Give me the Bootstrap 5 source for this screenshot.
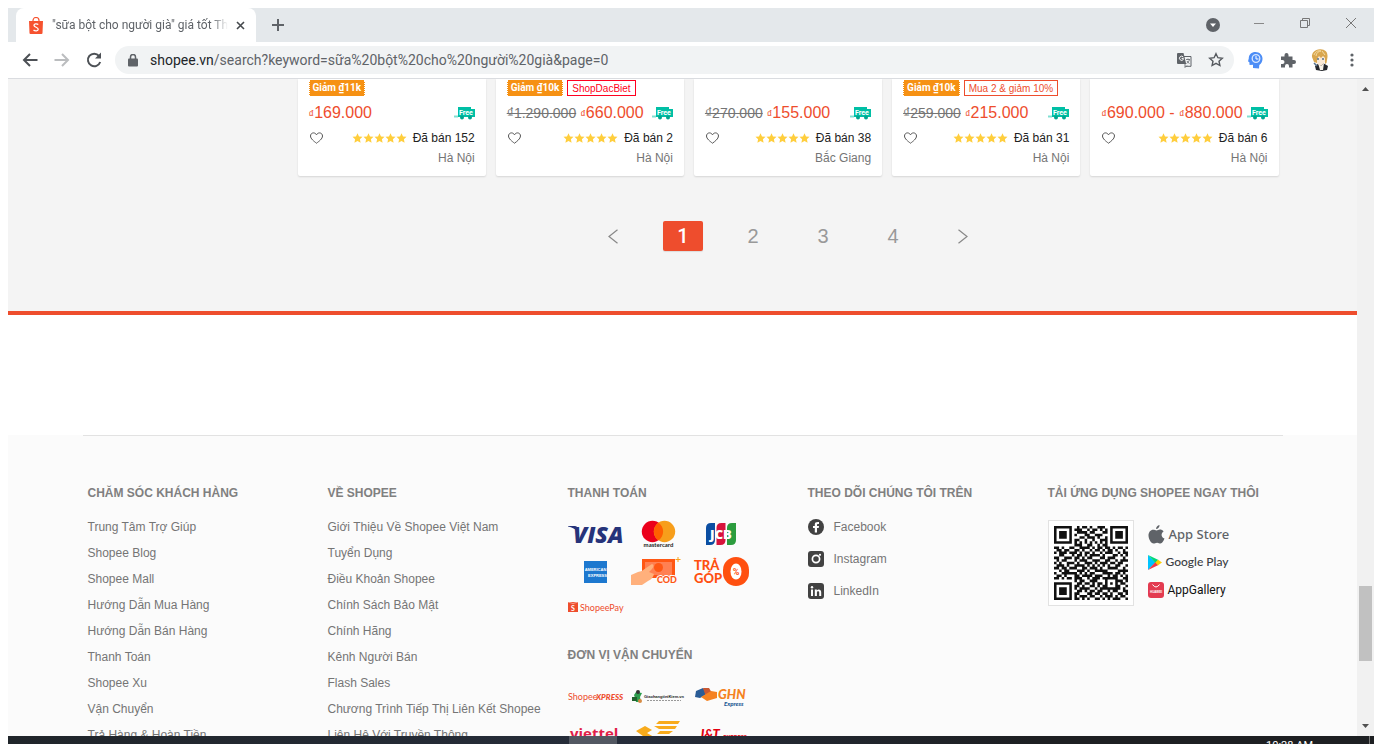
<!DOCTYPE html>
<html lang="vi">
<head>
<meta charset="utf-8">
<meta name="viewport" content="width=device-width, initial-scale=1">
<title>"sữa bột cho người già" giá tốt</title>
<link href="https://cdn.jsdelivr.net/npm/bootstrap@5.3.0/dist/css/bootstrap.min.css" rel="stylesheet">
<script src="https://cdn.jsdelivr.net/npm/bootstrap@5.3.0/dist/js/bootstrap.bundle.min.js"></script>
<style>
  body { font: 12px/16px "Liberation Sans", Arial, sans-serif; color: #222; background: #fff; padding: 8px 8px 0; }
  a { color: inherit; text-decoration: none; }
  button { border: 0; background: none; padding: 0; color: #5f6368; display: inline-flex; align-items: center; justify-content: center; }
  svg { display: block; flex: none; }
  /* browser frame */
  .ui-font { font-family: Roboto, "Noto Sans", sans-serif; }
  .tab-strip { background: #e4e8eb; height: 34px; padding-right: 18px; }
  .tab-item { background: #fff; width: 240px; margin-left: 8px; border-radius: 8px 8px 0 0; padding: 0 10px 0 12px; color: #5f6368; font-size: 12px; }
  .tab-title { width: 176px; overflow: hidden; white-space: nowrap; -webkit-mask-image: linear-gradient(90deg, #000 160px, transparent 176px); mask-image: linear-gradient(90deg, #000 160px, transparent 176px); }
  .window-controls { gap: 34px; }
  .toolbar { height: 37px; border-bottom: 1px solid #dadce0; padding: 0 14px; }
  .omnibox { background: #f1f3f4; border-radius: 14px; height: 28px; padding: 0 10px 0 13px; margin: 0 13px; gap: 12px; }
  .address { font-size: 14px; color: #5f6368; white-space: nowrap; }
  .extensions { gap: 15px; }
  .scroll-track { width: 17px; background: #f1f1f1; }
  .scroll-thumb { width: 13px; height: 75px; background: #c1c1c1; margin-top: 495px; }
  .taskbar { height: 8px; background: linear-gradient(90deg, #20252a, #262d3a 45%, #1d1f22 75%); overflow: hidden; }
  .task-active { width: 48px; background: #535862; margin-left: 561px; }
  .task-clock { color: #fff; padding: 2px 56px 0 0; font-size: 11px; }
  .task-edge { width: 5px; border-left: 1px solid #777; }
  /* results */
  .page { width: 1200px; max-width: 100%; }
  .results { background: #f4f4f4; border-bottom: 4px solid #ee4d2d; height: 236px; }
  .side { width: 215px; }
  .products { gap: 10px; }
  .product { background: #fff; height: 97px; padding: 1px 11px 10px; flex: 1 1 0; border-radius: 0 0 2px 2px; box-shadow: 0 1px 2px rgba(0,0,0,.13); min-width: 0; }
  .tags { height: 16px; gap: 4px; }
  .voucher { background: #f69113; color: #fff; font: bold 10px/16px Roboto, sans-serif; padding: 0 3px; border: dotted #fff; border-width: 0 1px; }
  .promo { color: #ee4d2d; border: 1px solid; font-size: 10px; line-height: 14px; padding: 1px 4px 0; height: 16px; }
  .promo-pink { color: #ff0020; }
  .price-row { height: 24px; margin-top: 5px; }
  .price { color: #ee4d2d; font-size: 16px; line-height: 24px; padding-top: 1px; }
  .price small { font-size: 11px; }
  .old-price { color: #757575; font-size: 14px; margin-right: 4px; }
  .sold-row { height: 20px; margin-top: 3px; }
  .rating { margin-right: 6px; }
  .place { color: #757575; line-height: 20px; }
  .pager { padding-top: 45px; gap: 30px; }
  .pager button { width: 40px; height: 30px; font-size: 20px; color: #999; border-radius: 2px; }
  .pager .current { background: #ee4d2d; color: #fff; font-family: Roboto, sans-serif; font-weight: 500; box-shadow: 0 1px 1px rgba(0,0,0,.1); }
  /* footer */
  .gap-band { height: 120px; }
  .foot { background: #fbfbfb; color: #757575; }
  .foot .page { border-top: 1px solid #e2e2e2; padding-top: 49px; }
  .foot-col { flex: 1 1 0; padding: 0 5px; min-width: 0; }
  .foot h2 { font-size: 12px; line-height: 16px; font-weight: bold; margin: 0 0 18px; color: #808080; white-space: nowrap; }
  .foot li { line-height: 16px; margin-bottom: 10px; white-space: nowrap; }
  .logos { display: grid; grid-template-columns: repeat(3, 55px); grid-auto-rows: 29px; gap: 8px; padding-top: 1px; }
  .apps { padding-top: 1px; gap: 14px; }
  .foot .social li { margin-bottom: 16px; }
  .qr { border: 1px solid #e2e2e2; background: #fff; width: 86px; height: 86px; padding: 5px; }
  .store { gap: 4px; height: 28px; }
  .store-apple { font: 500 13px/20px "Noto Sans", sans-serif; color: #5f6368; }
  .store-play { font: 500 12px/20px Lato, sans-serif; color: #3c4043; }
  .store-gallery { font: 12px/20px Roboto, sans-serif; color: #111; }
</style>
</head>
<body class="vh-100 d-flex flex-column overflow-hidden">
<svg width="0" height="0" class="position-absolute" aria-hidden="true">
  <defs>
    <symbol id="star" viewBox="0 0 11 10"><path fill="#ffce3d" d="M5.500 .2l1.500 3.200 3.500.4-2.600 2.400.7 3.500-3.100-1.800-3.100 1.800.7-3.500L.5 3.800 4 3.400z"/></symbol>
    <symbol id="heart" viewBox="0 0 14 12"><path fill="none" stroke="#555" d="M7 11.200C4.600 9.400 1 6.800 1 4 1 2.200 2.300.9 4 .9c1.300 0 2.400.8 3 1.900C7.600 1.700 8.700.9 10 .9c1.700 0 3 1.300 3 3.100 0 2.800-3.600 5.400-6 7.200z"/></symbol>
    <symbol id="truck" viewBox="0 0 21 13"><path fill="#00bfa5" d="M4 0h13v2h4v8H4z"/><path fill="#80dfd2" d="M0 8.500h4v2H0z"/><circle cx="8" cy="10.500" r="2" fill="#00a58f"/><circle cx="16" cy="10.500" r="2" fill="#00a58f"/><text x="5" y="7.500" font-family="Roboto" font-weight="bold" font-size="7" fill="#fff">Free</text></symbol>
  </defs>
</svg>

<header class="ui-font">
  <div class="tab-strip d-flex align-items-stretch">
    <div class="tab-item d-flex align-items-center">
      <svg width="16" height="17" viewBox="0 0 16 17"><path d="M5 5V3.500a3 3 0 0 1 6 0V5" fill="none" stroke="#f6522f" stroke-width="1.200"/><path d="M1 4h14l-.5 12a1 1 0 0 1-1 1h-11a1 1 0 0 1-1-1z" fill="#f6522f"/><path d="M10.300 7.600C8.800 6.300 5.900 6.600 6 8.500c.1 2 4.300 1.500 4.200 3.700-.1 2-3 2.300-4.700.8" fill="none" stroke="#fff" stroke-width="1.300"/></svg>
      <span class="tab-title ms-2">"sữa bột cho người già" giá tốt Th</span>
      <button type="button" class="ms-2" aria-label="Đóng thẻ"><svg width="9" height="9" viewBox="0 0 9 9"><path d="M1 1l7 7M8 1L1 8" stroke="#45494d" stroke-width="1.600"/></svg></button>
    </div>
    <button type="button" class="ms-3" aria-label="Thẻ mới"><svg width="12" height="12" viewBox="0 0 12 12"><path d="M6 0v12M0 6h12" stroke="#5f6368" stroke-width="2"/></svg></button>
    <div class="window-controls ms-auto d-flex align-items-center">
      <button type="button" aria-label="Tìm kiếm thẻ"><svg width="14" height="14" viewBox="0 0 14 14"><circle cx="7" cy="7" r="7" fill="#5f6368"/><path d="M4 5.500h6L7 9z" fill="#fff"/></svg></button>
      <button type="button" class="pb-1" aria-label="Thu nhỏ"><svg width="10" height="10" viewBox="0 0 10 10"><path d="M0 5.500h10" stroke="#888"/></svg></button>
      <button type="button" class="pb-1" aria-label="Khôi phục"><svg width="14" height="10" viewBox="0 0 14 10"><path d="M2.500 2.500h7v7h-7zM4.500 2.500v-2h7v7h-2" fill="none" stroke="#777"/></svg></button>
      <button type="button" class="pb-1" aria-label="Đóng"><svg width="10" height="10" viewBox="0 0 10 10"><path d="M0 0l10 10M10 0L0 10" stroke="#777"/></svg></button>
    </div>
  </div>
  <div class="toolbar d-flex align-items-center">
    <button type="button" aria-label="Quay lại"><svg width="16" height="14" viewBox="0 0 16 14"><path d="M15.500 7H3M8 1L2 7l6 6" fill="none" stroke="#4d5156" stroke-width="2"/></svg></button>
    <button type="button" class="ms-3" aria-label="Tiến"><svg width="16" height="14" viewBox="0 0 16 14"><path d="M.5 7H13M8 1l6 6-6 6" fill="none" stroke="#bbbdbf" stroke-width="2"/></svg></button>
    <button type="button" class="ms-3" aria-label="Tải lại"><svg width="16" height="16" viewBox="0 0 16 16"><path d="M13 3.800A6.300 6.300 0 1 0 14.200 10" fill="none" stroke="#4d5156" stroke-width="2"/><path d="M15 .5v6H9z" fill="#4d5156"/></svg></button>
    <div class="omnibox d-flex align-items-center flex-grow-1">
      <svg width="10" height="13" viewBox="0 0 10 13"><rect y="4.500" width="10" height="8" rx="1" fill="#5f6368"/><path d="M2.500 5V3a2.500 2.500 0 0 1 5 0v2" fill="none" stroke="#5f6368" stroke-width="1.500"/></svg>
      <a href="#" class="address flex-grow-1"><span class="text-dark">shopee.vn</span>/search?keyword=sữa%20bột%20cho%20người%20già&amp;page=0</a>
      <button type="button" aria-label="Dịch"><svg width="15" height="15" viewBox="0 0 15 15"><path d="M6.500 3.500h7.500v9.800H8.500" fill="none" stroke="#5f6368"/><path d="M1 0h5.500l2.700 11H1a1 1 0 0 1-1-1V1a1 1 0 0 1 1-1z" fill="#5f6368"/><path d="M6.300 4A2.100 2.100 0 1 0 6.300 6.500V5.400H4.600" fill="none" stroke="#fff"/><path d="M9 6.500h4M11 5.500v1M12.500 6.500c-.5 2-1.500 3-3 4M10 8c.5 1 1.500 2 2.500 2.500M8 11v3.500l2-2" fill="none" stroke="#5f6368" stroke-width=".8"/></svg></button>
      <button type="button" class="ms-1" aria-label="Đánh dấu trang"><svg width="16" height="16" viewBox="0 0 16 16"><path d="M8 1.700l1.900 4 4.400.5-3.300 3 .9 4.300L8 11.400l-3.900 2.100.9-4.300-3.300-3 4.400-.5z" fill="none" stroke="#55595e" stroke-width="1.400"/></svg></button>
    </div>
    <div class="extensions d-flex align-items-center">
      <button type="button" aria-label="Tiện ích"><svg width="18" height="17" viewBox="-1 0 18 17"><path d="M7.500 0C3.500 0 .8 2.700.8 6.200L0 9.500l1.300.6.3 3 3.400-.3V16l6 .5.300-3.500C13.500 11.500 14.500 9.300 14.500 6.800 14.500 2.800 11.500 0 7.500 0z" fill="#4c8df6"/><circle cx="8" cy="6.500" r="3.800" fill="none" stroke="#d8e7ff" stroke-width="1.300"/><path d="M8 4v3h2.500" fill="none" stroke="#fff"/></svg></button>
      <button type="button" aria-label="Phần mở rộng"><svg width="16" height="16" viewBox="0 0 16 16"><path d="M1 4.500h3.500V3a2 2 0 1 1 4 0v1.500h4V8H14a2 2 0 1 1 0 4h-1.500v3.500H9V14a2 2 0 1 0-4 0v1.500H1V12h1.500a2 2 0 1 0 0-4H1z" fill="#5f6368"/></svg></button>
      <button type="button" aria-label="Hồ sơ"><svg width="18" height="22" viewBox="0 0 18 22"><path d="M4 17l4-3h4l5 3-1 4-5 1-6-1z" fill="#26282d"/><path d="M7 14l3 3 3-3-1 7H9z" fill="#f7f2e8"/><path d="M4 7h10v6l-4 4-5-3z" fill="#fbe9d4"/><path d="M1 8C.5 4 4 0 9.500.3 14 .5 17 3 16.500 8l-1 6-1.500 1V9l-2-2-2 2-2-2-2 3v4l-3-1z" fill="#d9a74f"/><path d="M3 6c1-3 4-5 7-4-2 0-5 2-5 5M11 2l3 4" fill="none" stroke="#f5dba0"/><path d="M6 10h2M11 10h2M3 14l3 3" stroke="#57718b" stroke-width="1.500"/></svg></button>
      <button type="button" aria-label="Trình đơn"><svg width="16" height="14" viewBox="0 0 16 14" fill="#5f6368"><circle cx="8" cy="2" r="1.600"/><circle cx="8" cy="7" r="1.600"/><circle cx="8" cy="12" r="1.600"/></svg></button>
    </div>
  </div>
</header>

<div class="d-flex flex-grow-1 overflow-hidden">
  <div class="flex-grow-1 overflow-hidden">
    <main class="results">
      <div class="page mx-auto d-flex">
        <div class="side flex-shrink-0"></div>
        <div class="flex-grow-1 pe-1">
          <div class="products d-flex" id="products"></div>
          <nav class="pager d-flex justify-content-center" aria-label="Trang">
            <button type="button" aria-label="Trang trước"><svg width="10" height="15" viewBox="0 0 10 15"><path d="M9.500.8L1 7.500l8.500 6.700" fill="none" stroke="#888" stroke-width="1.200"/></svg></button>
            <button type="button" class="current">1</button>
            <button type="button">2</button>
            <button type="button">3</button>
            <button type="button">4</button>
            <button type="button" aria-label="Trang sau"><svg width="10" height="15" viewBox="0 0 10 15"><path d="M.5.8L9 7.500.5 14.200" fill="none" stroke="#888" stroke-width="1.200"/></svg></button>
          </nav>
        </div>
      </div>
    </main>
    <div class="gap-band"></div>
    <footer class="foot">
      <div class="page mx-auto d-flex">
        <section class="foot-col">
          <h2>CHĂM SÓC KHÁCH HÀNG</h2>
          <ul class="list-unstyled">
            <li><a href="#">Trung Tâm Trợ Giúp</a></li><li><a href="#">Shopee Blog</a></li><li><a href="#">Shopee Mall</a></li><li><a href="#">Hướng Dẫn Mua Hàng</a></li><li><a href="#">Hướng Dẫn Bán Hàng</a></li><li><a href="#">Thanh Toán</a></li><li><a href="#">Shopee Xu</a></li><li><a href="#">Vận Chuyển</a></li><li><a href="#">Trả Hàng &amp; Hoàn Tiền</a></li>
          </ul>
        </section>
        <section class="foot-col">
          <h2>VỀ SHOPEE</h2>
          <ul class="list-unstyled">
            <li><a href="#">Giới Thiệu Về Shopee Việt Nam</a></li><li><a href="#">Tuyển Dụng</a></li><li><a href="#">Điều Khoản Shopee</a></li><li><a href="#">Chính Sách Bảo Mật</a></li><li><a href="#">Chính Hãng</a></li><li><a href="#">Kênh Người Bán</a></li><li><a href="#">Flash Sales</a></li><li><a href="#">Chương Trình Tiếp Thị Liên Kết Shopee</a></li><li><a href="#">Liên Hệ Với Truyền Thông</a></li>
          </ul>
        </section>
        <section class="foot-col">
          <h2>THANH TOÁN</h2>
          <div class="logos">
            <a href="#"><svg width="56" height="29" viewBox="0 0 56 29"><path d="M0 6h7q2 0 2.500 2l1 4Q6 7.500 0 6.500z" fill="#26337a"/><text x="5" y="23" font-family="Open Sans" font-style="italic" font-weight="800" font-size="23" fill="#26337a">VISA</text></svg></a>
            <a href="#"><svg width="55" height="29" viewBox="0 0 55 29"><circle cx="21.500" cy="11.500" r="10.700" fill="#eb001b"/><circle cx="33.500" cy="11.500" r="10.700" fill="#f79e1b"/><path d="M27.500 2.700a10.700 10.700 0 0 1 0 17.600 10.700 10.700 0 0 1 0-17.600z" fill="#ff5f00"/><text x="27.500" y="27" text-anchor="middle" font-family="Lato" font-weight="bold" font-size="6" fill="#222">mastercard</text></svg></a>
            <a href="#"><svg width="55" height="29" viewBox="0 0 55 29"><path d="M12 20V8q0-5 5-5h4v17q0 5-5 5h-4z" fill="#0b4ea2"/><path d="M22.500 20V8q0-5 5-5h4v17q0 5-5 5h-4z" fill="#d7133b"/><path d="M33 20V8q0-5 5-5h4v17q0 5-5 5h-4z" fill="#2c9c3e"/><text x="27" y="18.500" text-anchor="middle" font-family="Open Sans" font-weight="800" font-size="13" fill="#fff">JCB</text></svg></a>
            <a href="#"><svg width="55" height="29" viewBox="0 0 55 29"><path fill="#1d78cf" d="M16 4h23v22H16z"/><text x="27.500" y="14" text-anchor="middle" font-family="Liberation Sans" font-weight="bold" font-size="4" fill="#fff">AMERICAN</text><text x="29.500" y="19.500" text-anchor="middle" font-family="Liberation Sans" font-weight="bold" font-size="4" fill="#fff">EXPRESS</text></svg></a>
            <a href="#"><svg width="55" height="29" viewBox="0 0 55 29"><path fill="#ff5714" d="M11 2h33v19H11z"/><path fill="#ff8052" d="M14 5h27v13H14z"/><circle cx="27.500" cy="10.500" r="4.500" fill="#ff5714"/><path d="M0 18l7-3q5-1 8-4l6-4q3 1 0 5l-3 3 5 2q-1 5-6 7l-6 4H0z" fill="#ffb07c"/><path d="M47 0v5M44.500 2.500h5" stroke="#f9a11b"/><text x="26" y="26" font-family="Lato" font-weight="900" font-size="9" fill="#ff5714" stroke="#fbfbfb" stroke-width="2" paint-order="stroke">COD</text></svg></a>
            <a href="#"><svg width="58" height="29" viewBox="0 0 58 29" class="overflow-visible"><g font-family="Lato" font-weight="900" font-size="13" fill="#ff5010"><text x="0" y="13">TRẢ</text><text x="0" y="26">GÓP</text></g><rect x="29" width="26" height="29" rx="13" fill="#ff5010"/><ellipse cx="42" cy="14.500" rx="5.500" ry="8" fill="#fff"/><text x="42" y="18" text-anchor="middle" font-family="Roboto" font-weight="bold" font-size="9" fill="#ff5010">%</text></svg></a>
            <a href="#"><svg width="56" height="29" viewBox="0 0 56 29"><path fill="#ee4d2d" d="M0 8h10v10H0z"/><path d="M0 8q5 3 10 0" stroke="#fff" stroke-width=".5" fill="none"/><text x="3" y="17" font-family="Lato" font-weight="bold" font-size="7" fill="#fff">S</text><text x="12" y="17" font-family="Lato" font-size="9" fill="#ee4d2d">ShopeePay</text></svg></a>
          </div>
          <h2 class="mt-4">ĐƠN VỊ VẬN CHUYỂN</h2>
          <div class="logos">
            <a href="#"><svg width="56" height="29" viewBox="0 0 56 29" fill="#ee4d2d" font-family="Lato" font-size="9"><text y="18">Shopee</text><text x="28" y="18" font-weight="900" font-style="italic" font-size="8">XPRESS</text></svg></a>
            <a href="#"><svg width="55" height="29" viewBox="0 0 55 29"><path d="M3 13l2-3 6 1-2 4 1 5H5l-1-4z" fill="#2d9d4d"/><circle cx="7" cy="10" r="2" fill="#333"/><path d="M1 15h5v4H1z" fill="#21622f"/><circle cx="9" cy="19" r="2" fill="#d68b44"/><text x="13" y="16" font-family="Liberation Sans" font-weight="bold" font-size="4" fill="#222">GiaohangtietKiem.vn</text><path d="M16 18.500h34" stroke="#999" stroke-dasharray="2 1"/></svg></a>
            <a href="#"><svg width="58" height="29" viewBox="0 0 58 29"><path d="M2 9l7-3 4 6-7 4-5-1z" fill="#2a5c96"/><path d="M9 6l6 0 3 5-6 4z" fill="#c95832"/><path d="M7 15l10-6 6 1v6l-10 3z" fill="#f58220"/><text x="24" y="17" font-family="Lato" font-weight="900" font-style="italic" font-size="13" fill="#f58220">GHN</text><text x="30" y="24" font-family="Lato" font-weight="900" font-style="italic" font-size="6" fill="#1b5794">Express</text></svg></a>
            <a href="#"><svg width="56" height="29" viewBox="0 0 56 29"><text x="2" y="20" font-family="Open Sans" font-weight="bold" font-size="15" fill="#e11d48">viettel</text></svg></a>
            <a href="#"><svg width="55" height="29" viewBox="0 0 55 29"><g fill="#f8ab1c"><path d="M5 12l9-5 7 4-5 3 7 4v7z"/><path d="M28 2h21l-2 3H25zM23 7h23l-2 3H28zM29 12h13l-4 3H26zM25 17h11L20 27z"/></g></svg></a>
            <a href="#"><svg width="55" height="29" viewBox="0 0 55 29" fill="#e3000f" font-family="Lato" font-weight="900" font-style="italic"><text x="5" y="20" font-size="13">J&amp;T</text><text x="29" y="20" font-size="6">EXPRESS</text></svg></a>
          </div>
        </section>
        <section class="foot-col">
          <h2>THEO DÕI CHÚNG TÔI TRÊN</h2>
          <ul class="list-unstyled social">
            <li><a href="#" class="d-flex align-items-center"><svg class="me-2" width="18" height="16" viewBox="0 0 18 16"><circle cx="8" cy="8" r="8" fill="#424242"/><path d="M6.800 13.500V9H5V7h1.800V5.500C6.800 3.600 7.800 2.800 11 3v1.900c-1.500-.1-2 .1-2 .9V7h2l-.3 2H9v4.500z" fill="#fff"/></svg>Facebook</a></li>
            <li><a href="#" class="d-flex align-items-center"><svg class="me-2" width="18" height="16" viewBox="0 0 18 16"><rect width="16" height="16" rx="3" fill="#424242"/><circle cx="8" cy="8" r="3.600" fill="none" stroke="#fff" stroke-width="1.700"/><circle cx="12" cy="3.800" r="1.100" fill="#fff"/></svg>Instagram</a></li>
            <li><a href="#" class="d-flex align-items-center"><svg class="me-2" width="18" height="16" viewBox="0 0 18 16"><rect width="16" height="16" rx="3" fill="#424242"/><path d="M3 6.500h2V13H3zM6.800 6.500h2v1c1.300-1.700 4.400-1.400 4.400 1.700V13h-2V9.500c0-1.800-2.300-1.700-2.300 0V13H6.800z" fill="#fff"/><circle cx="4" cy="4.300" r="1.200" fill="#fff"/></svg>LinkedIn</a></li>
          </ul>
        </section>
        <section class="foot-col">
          <h2>TẢI ỨNG DỤNG SHOPEE NGAY THÔI</h2>
          <div class="apps d-flex">
            <a href="#" class="qr" aria-label="Mã QR tải ứng dụng"><svg id="qr" width="74" height="74" viewBox="0 0 29 29"></svg></a>
            <div>
              <a href="#" class="store d-flex align-items-center"><svg width="17" height="19" viewBox="0 0 16 19"><path fill="#5f6368" d="M11 0c.2 2-1.500 4-3.400 4C7.400 2.200 9 .3 11 0zM8 5.400C9 5.400 10 4.500 11.500 4.500c1.200 0 2.700.6 3.600 2-3 1.800-2.500 5.800.9 7-.8 2-2.300 5-4 5-1.300 0-1.800-.8-3.400-.8-1.700 0-2.200.8-3.500.8C2.500 18.500 0 14 0 10.500 0 7 2.200 4.700 4.600 4.700c1.400 0 2.400.7 3.400.7z"/></svg><span class="store-apple">App Store</span></a>
              <a href="#" class="store d-flex align-items-center"><svg width="14" height="15" viewBox="0 0 14 15"><path d="M0 0v15l7.500-7.500z" fill="#00c4ff"/><path d="M0 0l10.500 5L7.500 8z" fill="#00d978"/><path d="M0 15l10.500-5-3-3z" fill="#f23a48"/><path d="M10 4.800l4 2.700-4 2.700-2.700-2.700z" fill="#ffce00"/></svg><span class="store-play">Google Play</span></a>
              <a href="#" class="store d-flex align-items-center"><svg width="16" height="16" viewBox="0 0 16 16"><rect width="16" height="16" rx="3" fill="#e33b50"/><path d="M4.500 2.500q3.500 5 7 0" fill="none" stroke="#fff"/><text x="8" y="10.500" text-anchor="middle" font-family="Liberation Sans" font-weight="bold" font-size="3" fill="#fff">HUAWEI</text></svg><span class="store-gallery">AppGallery</span></a>
            </div>
          </div>
        </section>
      </div>
    </footer>
  </div>
  <div class="scroll-track d-flex flex-column align-items-center flex-shrink-0 py-2" aria-hidden="true">
    <svg width="7" height="4" viewBox="0 0 7 4"><path d="M0 4l3.500-4L7 4z" fill="#505050"/></svg>
    <div class="scroll-thumb"></div>
    <svg class="mt-auto" width="7" height="4" viewBox="0 0 7 4"><path d="M0 0l3.500 4L7 0z" fill="#505050"/></svg>
  </div>
</div>
<div class="taskbar d-flex flex-shrink-0 ui-font"><div class="task-active"></div><div class="task-clock ms-auto">10:28 AM</div><div class="task-edge"></div></div>

<script>
  const products = [
    { voucher: '₫11k', price: ['169.000'], sold: 152, place: 'Hà Nội' },
    { voucher: '₫10k', promo: 'ShopDacBiet', pink: true, old: '1.290.000', price: ['660.000'], sold: 2, place: 'Hà Nội' },
    { old: '270.000', price: ['155.000'], sold: 38, place: 'Bắc Giang' },
    { voucher: '₫10k', promo: 'Mua 2 & giảm 10%', old: '259.000', price: ['215.000'], sold: 31, place: 'Hà Nội' },
    { price: ['690.000', '880.000'], sold: 6, place: 'Hà Nội' }
  ];
  const star = '<svg width="11" height="10"><use href="#star"/></svg>';
  document.getElementById('products').innerHTML = products.map(p => `
    <article class="product">
      <div class="tags d-flex">${p.voucher ? `<span class="voucher">Giảm ${p.voucher}</span>` : ''}${p.promo ? `<span class="promo ${p.pink ? 'promo-pink' : ''}">${p.promo.replace('&', '&amp;')}</span>` : ''}</div>
      <div class="price-row d-flex align-items-center text-nowrap">
        ${p.old ? `<del class="old-price">₫${p.old}</del>` : ''}<span class="price">${p.price.map(v => `<small>₫</small>${v}`).join(' - ')}</span>
        <svg class="ms-auto" width="21" height="13"><use href="#truck"/></svg>
      </div>
      <div class="sold-row d-flex align-items-center">
        <button type="button" aria-label="Yêu thích"><svg width="15" height="12"><use href="#heart"/></svg></button>
        <span class="rating d-flex ms-auto">${star.repeat(5)}</span><span>Đã bán ${p.sold}</span>
      </div>
      <div class="place text-end">${p.place}</div>
    </article>`).join('');

  // QR code, one string per row of modules
  const rows = [
    '11111110010110100111001111111','10000010111001011010101000001','10111010011110110001101011101','10111010100011001110001011101',
    '10111010001101110100101011101','10000010110010010011101000001','11111110101010101010101111111','00000000111001100101100000000',
    '11010011001111010110110101101','01101100110100101101011010010','10111011101011010010111001011','00110001011010111101000110101',
    '11001110110101100011011100010','01011000101110011100110010111','10100111010011101011101101100','01110100111101010101010011001',
    '11011011100110111010011110010','00101100011101001111100001111','10011111101010110001111011010','01101000110111101110010110101',
    '11010110111001011101111110011','00000000101100111000100011101','11111110011011010110101010110','10000010110100110101100011001',
    '10111010101111001011111111010','10111010011010110110010110011','10111010110001101101101001101','10000010101110110010111010110',
    '11111110110101001101010111001'];
  document.getElementById('qr').innerHTML = '<path fill="#111" d="' +
    rows.map((r, y) => [...r].map((c, x) => c === '1' ? `M${x} ${y}h1v1h-1z` : '').join('')).join('') + '"/>';
</script>
</body>
</html>
